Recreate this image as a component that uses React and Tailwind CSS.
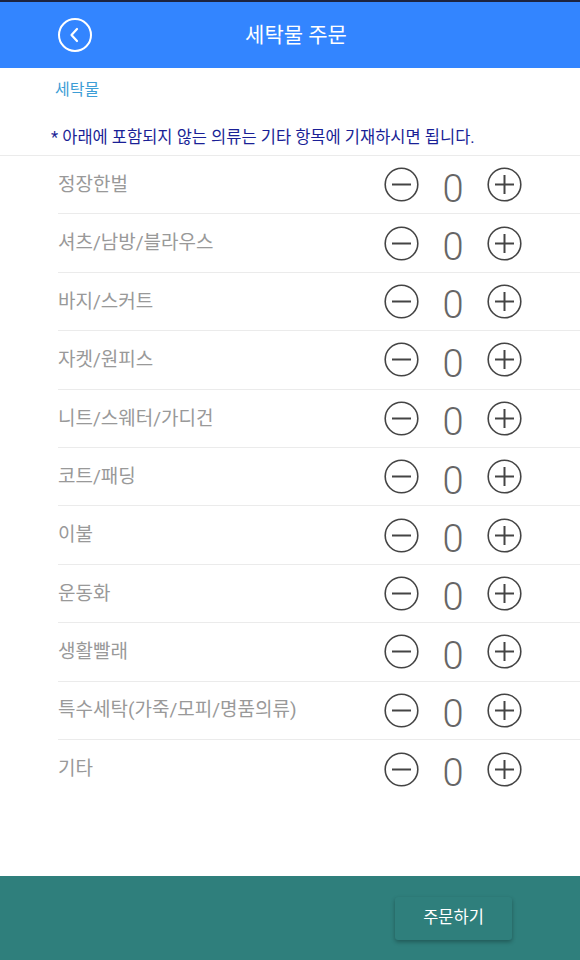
const items = [
  "정장한벌",
  "셔츠/남방/블라우스",
  "바지/스커트",
  "자켓/원피스",
  "니트/스웨터/가디건",
  "코트/패딩",
  "이불",
  "운동화",
  "생활빨래",
  "특수세탁(가죽/모피/명품의류)",
  "기타",
];

const CircleIcon = ({ plus }) => (
  <svg width="35" height="35" viewBox="0 0 35 35" fill="none" stroke="#444" strokeWidth="1.6">
    <circle cx="17.5" cy="17.5" r="16.3" />
    <line x1="8" y1="17.5" x2="27" y2="17.5" strokeWidth="2" />
    {plus && <line x1="17.5" y1="8" x2="17.5" y2="27" strokeWidth="2" />}
  </svg>
);

const App = () => {
  return (
    <div className="h-[960px] w-[580px] bg-white flex flex-col font-['Roboto','Noto_Sans_CJK_KR',sans-serif] overflow-hidden">
      <div className="h-[2px] bg-[#1c2340]"></div>
      <div className="h-[66px] bg-[#3385ff] flex items-center relative">
        <div className="absolute left-[58px] top-[16px] w-[34px] h-[34px] rounded-full border-2 border-white flex items-center justify-center">
          <svg width="14" height="16" viewBox="0 0 14 16" fill="none" stroke="white" strokeWidth="2.2" strokeLinecap="round" strokeLinejoin="round">
            <polyline points="9,2 3.5,8 9,14" />
          </svg>
        </div>
        <h1 className="w-full text-center text-white text-[21px] pl-[12px] pt-[1px]">세탁물 주문</h1>
      </div>
      <div className="px-[55px] pt-[10px] h-[44px] text-[#3d9ed6] text-[16px] leading-[24px]">세탁물</div>
      <div className="pl-[51px] pt-[15px] h-[43px] text-[#1a1f96] text-[16.5px] leading-[22px] whitespace-nowrap">
        * 아래에 포함되지 않는 의류는 기타 항목에 기재하시면 됩니다.
      </div>
      <div className="border-t border-[#ebebeb]">
        {items.map((name) => (
          <div key={name} className="ml-[58px] h-[58.4px] flex items-center border-b border-[#ebebeb] last:border-b-0">
            <span className="flex-1 text-[#999] text-[19px] pt-[1px]">{name}</span>
            <div className="flex items-center mr-[58px]">
              <CircleIcon />
              <span className="w-[68px] text-center text-[#666] text-[38px] font-light leading-none pt-[8px]">0</span>
              <CircleIcon plus />
            </div>
          </div>
        ))}
      </div>
      <div className="flex-1"></div>
      <div className="h-[84px] bg-[#2f7f7c] flex items-start justify-end pr-[68px] pt-[21px]">
        <button className="w-[117px] h-[43px] rounded-[3px] bg-[#2f7f7c] text-white text-[16.5px] shadow-[0_2px_4px_rgba(0,0,0,0.3)]">
          주문하기
        </button>
      </div>
    </div>
  );
};

export default App;
